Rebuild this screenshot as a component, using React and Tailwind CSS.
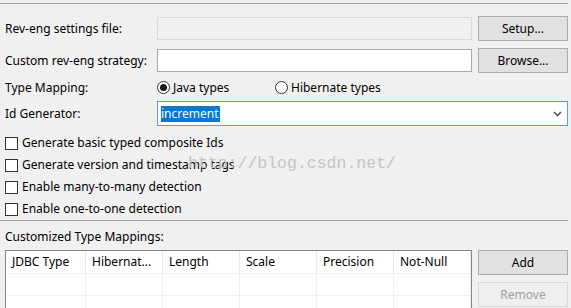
import React from 'react';

const font = { fontFamily: '"Noto Sans", "Noto Sans CJK SC", sans-serif' };

const Btn = ({ children, disabled }) => (
    <div
        className={`w-[90px] h-[25px] flex items-center justify-center border text-[12px] ${disabled ? 'bg-[#efefef] border-[#d9d9d9] text-[#a0a0a0]' : 'bg-[#e1e1e1] border-[#adadad] text-black'}`}
    >
        {children}
    </div>
);

const Check = ({ label }) => (
    <div className="h-[22px] flex items-center pl-[5px] gap-[4px]">
        <span className="w-[13px] h-[13px] border border-[#333] bg-white" />
        <span>{label}</span>
    </div>
);

const Radio = ({ label, checked }) => (
    <div className="flex items-center gap-[3px]">
        <span className="w-[13px] h-[13px] rounded-full border border-[#333] bg-white flex items-center justify-center">
            {checked && <span className="w-[7px] h-[7px] rounded-full bg-[#1a1a1a]" />}
        </span>
        <span>{label}</span>
    </div>
);

const columns = ['JDBC Type', 'Hibernat...', 'Length', 'Scale', 'Precision', 'Not-Null'];
const widths = ['w-[80px]', 'w-[77px]', 'w-[77px]', 'w-[77px]', 'w-[77px]', 'w-[77px]'];

export default function App() {
    return (
        <div className="w-[571px] h-[308px] bg-[#f0f0f0] overflow-hidden relative text-[12px] leading-[16px] text-black" style={font}>
            {/* top rule */}
            <div className="mt-[3px] h-px w-[568px] bg-[#a0a0a0]" />

            {/* settings file */}
            <div className="mt-[12px] h-[25px] flex items-center">
                <div className="w-[157px] pl-[5px]">Rev-eng settings file:</div>
                <div className="w-[315px] h-[23px] border border-[#d9d9d9] bg-[#f0f0f0]" />
                <div className="ml-[6px]"><Btn>Setup...</Btn></div>
            </div>

            {/* strategy */}
            <div className="mt-[7px] h-[25px] flex items-center">
                <div className="w-[157px] pl-[5px]">Custom rev-eng strategy:</div>
                <div className="w-[315px] h-[23px] border border-[#a9a9a9] bg-white" />
                <div className="ml-[6px]"><Btn>Browse...</Btn></div>
            </div>

            {/* type mapping */}
            <div className="mt-[2px] h-[25px] flex items-center">
                <div className="w-[157px] pl-[5px]">Type Mapping:</div>
                <div className="w-[118px]"><Radio label="Java types" checked /></div>
                <Radio label="Hibernate types" />
            </div>

            {/* id generator */}
            <div className="mt-[1px] h-[25px] flex items-center">
                <div className="w-[157px] pl-[5px]">Id Generator:</div>
                <div className="w-[411px] h-[25px] border border-[#569de5] bg-white flex items-center pl-[3px] pr-[5px]">
                    <span className="bg-[#0078d7] text-white h-[16px] leading-[16px] pr-px">increment</span>
                    <svg className="ml-auto" width="9" height="6" viewBox="0 0 9 6">
                        <path d="M1 1 L4.5 4.5 L8 1" fill="none" stroke="#555" strokeWidth="1.6" />
                    </svg>
                </div>
            </div>

            {/* options */}
            <div className="mt-[6px]">
                <Check label="Generate basic typed composite Ids" />
                <Check label="Generate version and timestamp tags" />
                <Check label="Enable many-to-many detection" />
                <Check label="Enable one-to-one detection" />
            </div>

            <div className="h-px w-[568px] bg-[#a0a0a0]" />

            <div className="pt-[8px] pb-[5px] pl-[5px]">Customized Type Mappings:</div>

            {/* mappings table + buttons */}
            <div className="flex pl-[5px]">
                <div className="w-[467px] h-[80px] border border-[#828790] bg-white">
                    <div className="flex h-[23px] border-b border-[#eef1f5]">
                        {columns.map((c, i) => (
                            <div key={c} className={`${widths[i]} h-full border-r border-[#e6ecf3] flex items-center pl-[6px]`}>{c}</div>
                        ))}
                    </div>
                    {[0, 1].map((r) => (
                        <div key={r} className="flex h-[22px] border-b border-[#f0f0f0]">
                            {columns.map((c, i) => (
                                <div key={c} className={`${widths[i]} h-full border-r border-[#f0f0f0]`} />
                            ))}
                        </div>
                    ))}
                </div>
                <div className="ml-[6px] flex flex-col gap-[7px]">
                    <Btn>Add</Btn>
                    <Btn disabled>Remove</Btn>
                </div>
            </div>

            {/* watermark */}
            <div className="absolute left-[188px] top-[155px] text-[16.5px] leading-[18px] text-[#c4c4c4] pointer-events-none" style={{ fontFamily: '"Liberation Mono", monospace' }}>
                http://blog.csdn.net/
            </div>
        </div>
    );
}
